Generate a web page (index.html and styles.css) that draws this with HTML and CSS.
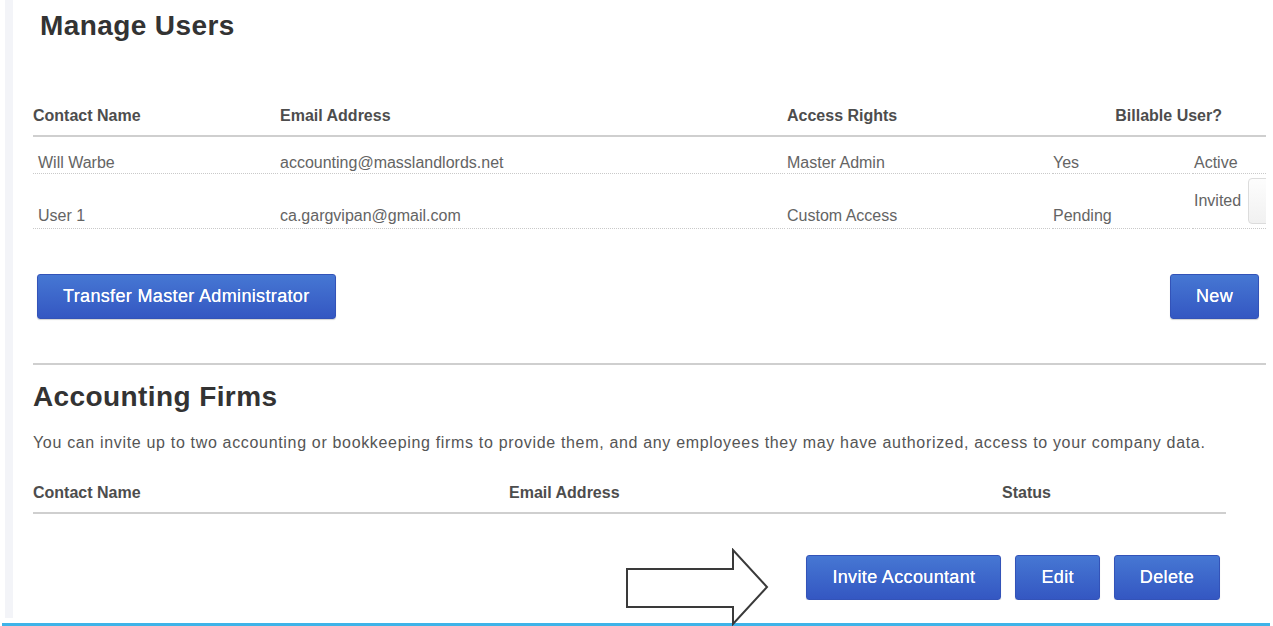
FILE: index.html
```html
<!DOCTYPE html>
<html lang="en">
<head>
<meta charset="utf-8">
<title>Manage Users</title>
<link rel="stylesheet" href="styles.css">
</head>
<body>
<div class="page">
  <div class="content">
    <h1 class="title title-users">Manage Users</h1>

    <div class="users-table">
      <div class="thead">
        <div class="th">Contact Name</div>
        <div class="th">Email Address</div>
        <div class="th th-access">Access Rights</div>
        <div class="th th-bill">Billable User?</div>
      </div>
      <div class="tr tr-1">
        <div class="td td-name">Will Warbe</div>
        <div class="td">accounting@masslandlords.net</div>
        <div class="td">Master Admin</div>
        <div class="td td-bill">Yes</div>
        <div class="td td-status">Active</div>
      </div>
      <div class="tr tr-2">
        <div class="td td-name">User 1</div>
        <div class="td">ca.gargvipan@gmail.com</div>
        <div class="td">Custom Access</div>
        <div class="td td-bill">Pending</div>
        <div class="td td-status td-invited"><span>Invited</span><span class="resend"></span></div>
      </div>
    </div>

    <div class="actions actions-users">
      <button class="btn">Transfer Master Administrator</button>
      <button class="btn">New</button>
    </div>

    <hr class="divider">

    <h2 class="title title-firms">Accounting Firms</h2>
    <p class="intro">You can invite up to two accounting or bookkeeping firms to provide them, and any employees they may have authorized, access to your company data.</p>

    <div class="firms-head">
      <div class="th">Contact Name</div>
      <div class="th">Email Address</div>
      <div class="th">Status</div>
    </div>

    <div class="actions actions-firms">
      <button class="btn">Invite Accountant</button>
      <button class="btn">Edit</button>
      <button class="btn">Delete</button>
    </div>
  </div>

  <svg class="arrow" width="150" height="80" viewBox="0 0 150 80" aria-hidden="true">
    <path d="M3 21 H109 V2 L143 39 L109 76 V59 H3 Z" fill="#fff" stroke="#3a3a3a" stroke-width="2" stroke-linejoin="miter"/>
  </svg>
</div>
<div class="bottom-line"></div>
</body>
</html>
```

FILE: styles.css
```css
html, body {
  margin: 0;
  padding: 0;
  background: #fff;
}

body {
  font-family: "Liberation Sans", Arial, Helvetica, sans-serif;
  color: #5a5a5a;
  overflow: hidden;
}

.page {
  position: relative;
  margin-left: 5px;
  border-left: 8px solid #f3f4f8;
  height: 618px;
  box-sizing: border-box;
  padding-left: 20px;
}

.content {
  width: 1233px;
  overflow: hidden;
}

.title {
  margin: 0;
  font-size: 28px;
  line-height: 32px;
  font-weight: bold;
  color: #333;
  letter-spacing: 0.4px;
}

.title-users {
  padding-top: 10px;
  padding-left: 7px;
}

.users-table {
  margin-top: 56px;
  width: 1233px;
  overflow: hidden;
}

.thead {
  display: grid;
  grid-template-columns: 247px 507px 265px 1fr;
  border-bottom: 2px solid #cfcfcf;
  padding: 8px 0 9px;
}

.th {
  font-size: 16px;
  line-height: 20px;
  font-weight: bold;
  color: #4d4d4d;
}

.th-bill {
  text-align: right;
  padding-right: 44px;
}

.tr {
  display: grid;
  grid-template-columns: 245px 505px 263px 138px 1fr;
  column-gap: 2px;
}

.td {
  display: flex;
  align-items: flex-end;
  font-size: 16px;
  line-height: 20px;
  color: #646464;
  border-bottom: 1px dotted #c9c9c9;
  white-space: nowrap;
}

.tr-1 .td {
  padding-top: 16px;
}

.tr-2 .td {
  padding-bottom: 2px;
}

.td-name {
  padding-left: 5px;
}

.td-bill {
  padding-left: 1px;
}

.td-status {
  padding-left: 2px;
}

.tr-2 .td-invited {
  align-items: center;
  padding: 4px 0 4px 2px;
  gap: 7px;
}

.resend {
  display: block;
  width: 40px;
  height: 44px;
  flex: none;
  border: 1px solid #dcdcdc;
  border-radius: 4px;
  background: linear-gradient(#fdfdfd, #f1f1f1);
}

.actions {
  display: flex;
  align-items: center;
}

.actions-users {
  margin-top: 45px;
  justify-content: space-between;
  padding: 0 7px 0 4px;
}

.actions-firms {
  margin-top: 41px;
  justify-content: flex-end;
  gap: 14px;
  width: 1187px;
}

.btn {
  height: 45px;
  padding: 0 25px;
  font-family: "Liberation Sans", Arial, Helvetica, sans-serif;
  font-size: 18px;
  letter-spacing: 0.35px;
  color: #fff;
  text-shadow: 0 0 0.4px #fff;
  background: linear-gradient(#4677d3, #3457c2);
  border: 1px solid #3353b8;
  border-radius: 3px;
  box-shadow: 0 1px 1px rgba(0, 0, 0, 0.18);
  cursor: pointer;
}

.divider {
  margin: 44px 0 0;
  border: 0;
  height: 2px;
  background: #cfcfcf;
}

.title-firms {
  margin-top: 16px;
}

.intro {
  margin: 20px 0 0;
  font-size: 16px;
  line-height: 20px;
  color: #555;
  letter-spacing: 0.67px;
  white-space: nowrap;
}

.firms-head {
  margin-top: 22px;
  width: 1193px;
  display: grid;
  grid-template-columns: 476px 493px 1fr;
  padding: 8px 0 9px;
  border-bottom: 2px solid #cfcfcf;
}

.arrow {
  position: absolute;
  left: 611px;
  top: 548px;
}

.bottom-line {
  margin-top: 5px;
  margin-left: 2px;
  width: 1268px;
  height: 3px;
  background: #3eb3e8;
}
```
